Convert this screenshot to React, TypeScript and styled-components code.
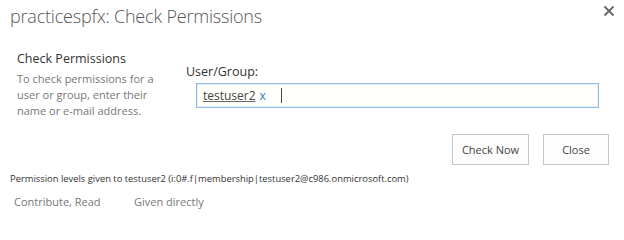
import React from 'react';
import styled, { createGlobalStyle } from 'styled-components';

const GlobalStyle = createGlobalStyle`
  html, body {
    margin: 0;
    padding: 0;
    background: #fff;
  }
  body {
    font-family: "Segoe UI", "Open Sans", "Noto Sans", sans-serif;
  }
`;

const Dialog = styled.div`
  width: 624px;
  height: 240px;
  background: #fff;
  display: flex;
  flex-direction: column;
  overflow: hidden;
`;

const Header = styled.div`
  display: flex;
  justify-content: space-between;
  align-items: flex-start;
  padding: 4px 9px 0 10px;
`;

const Title = styled.h1`
  margin: 0;
  font-size: 18px;
  font-weight: 300;
  color: #555;
  letter-spacing: -0.2px;
  line-height: 24px;
`;

const CloseIcon = styled.button`
  border: 0;
  background: none;
  padding: 0;
  margin-top: 1px;
  width: 12px;
  height: 12px;
  display: flex;
  cursor: pointer;
`;

const Body = styled.div`
  display: flex;
  padding: 22px 15px 0 17px;
`;

const Intro = styled.div`
  width: 169px;
  flex: none;
`;

const SectionTitle = styled.div`
  font-size: 12.5px;
  color: #333;
  line-height: 17px;
  margin-bottom: 4px;
`;

const Description = styled.div`
  max-width: 146px;
  font-size: 11px;
  color: #777;
  line-height: 16px;
`;

const Field = styled.div`
  flex: 1;
  display: flex;
  flex-direction: column;
  padding-top: 13px;
`;

const FieldLabel = styled.label`
  font-size: 12.5px;
  color: #333;
  line-height: 17px;
`;

const PeoplePicker = styled.div`
  margin: 3px 0 0 10px;
  width: 403px;
  height: 25px;
  box-sizing: border-box;
  border: 1px solid #92bde0;
  box-shadow: inset 0 0 0 1px #e6f1fb;
  background: #fffffb;
  display: flex;
  align-items: center;
  padding-left: 6px;
  gap: 4px;
`;

const Resolved = styled.span`
  font-size: 12px;
  color: #444;
  text-decoration: underline;
  text-decoration-color: #666;
`;

const RemoveLink = styled.span`
  font-size: 12px;
  color: #2a7dc7;
`;

const Caret = styled.span`
  width: 1px;
  height: 15px;
  background: #444;
  margin-left: 11px;
`;

const Actions = styled.div`
  display: flex;
  justify-content: flex-end;
  gap: 14px;
  padding: 15px 15px 0 0;
`;

const Button = styled.button<{ $width: number }>`
  width: ${({ $width }) => $width}px;
  height: 31px;
  box-sizing: border-box;
  border: 1px solid #c6c6c6;
  background: #fdfdfd;
  font-family: inherit;
  font-size: 11px;
  color: #444;
  padding: 0;
`;

const Result = styled.div`
  padding: 7px 0 0 10px;
  font-size: 9.4px;
  color: #333;
  line-height: 14px;
`;

const LevelRow = styled.div`
  display: flex;
  padding: 8px 0 0 14px;
  font-size: 11px;
  color: #777;
  line-height: 16px;
`;

const LevelCell = styled.span<{ $width?: number }>`
  ${({ $width }) => ($width ? `width: ${$width}px;` : '')}
`;

const App: React.FC = () => (
  <Dialog>
    <GlobalStyle />
    <Header>
      <Title>practicespfx: Check Permissions</Title>
      <CloseIcon aria-label="Close">
        <svg width="12" height="12" viewBox="0 0 12 12">
          <path d="M1.5 1.5L10.5 10.5M10.5 1.5L1.5 10.5" stroke="#666" strokeWidth="1.8" />
        </svg>
      </CloseIcon>
    </Header>
    <Body>
      <Intro>
        <SectionTitle>Check Permissions</SectionTitle>
        <Description>
          To check permissions for a user or group, enter their name or e-mail address.
        </Description>
      </Intro>
      <Field>
        <FieldLabel>User/Group:</FieldLabel>
        <PeoplePicker>
          <Resolved>testuser2</Resolved>
          <RemoveLink>x</RemoveLink>
          <Caret />
        </PeoplePicker>
      </Field>
    </Body>
    <Actions>
      <Button $width={77}>Check Now</Button>
      <Button $width={66}>Close</Button>
    </Actions>
    <Result>
      Permission levels given to testuser2 (i:0#.f|membership|testuser2@c986.onmicrosoft.com)
    </Result>
    <LevelRow>
      <LevelCell $width={120}>Contribute, Read</LevelCell>
      <LevelCell>Given directly</LevelCell>
    </LevelRow>
  </Dialog>
);

export default App;
